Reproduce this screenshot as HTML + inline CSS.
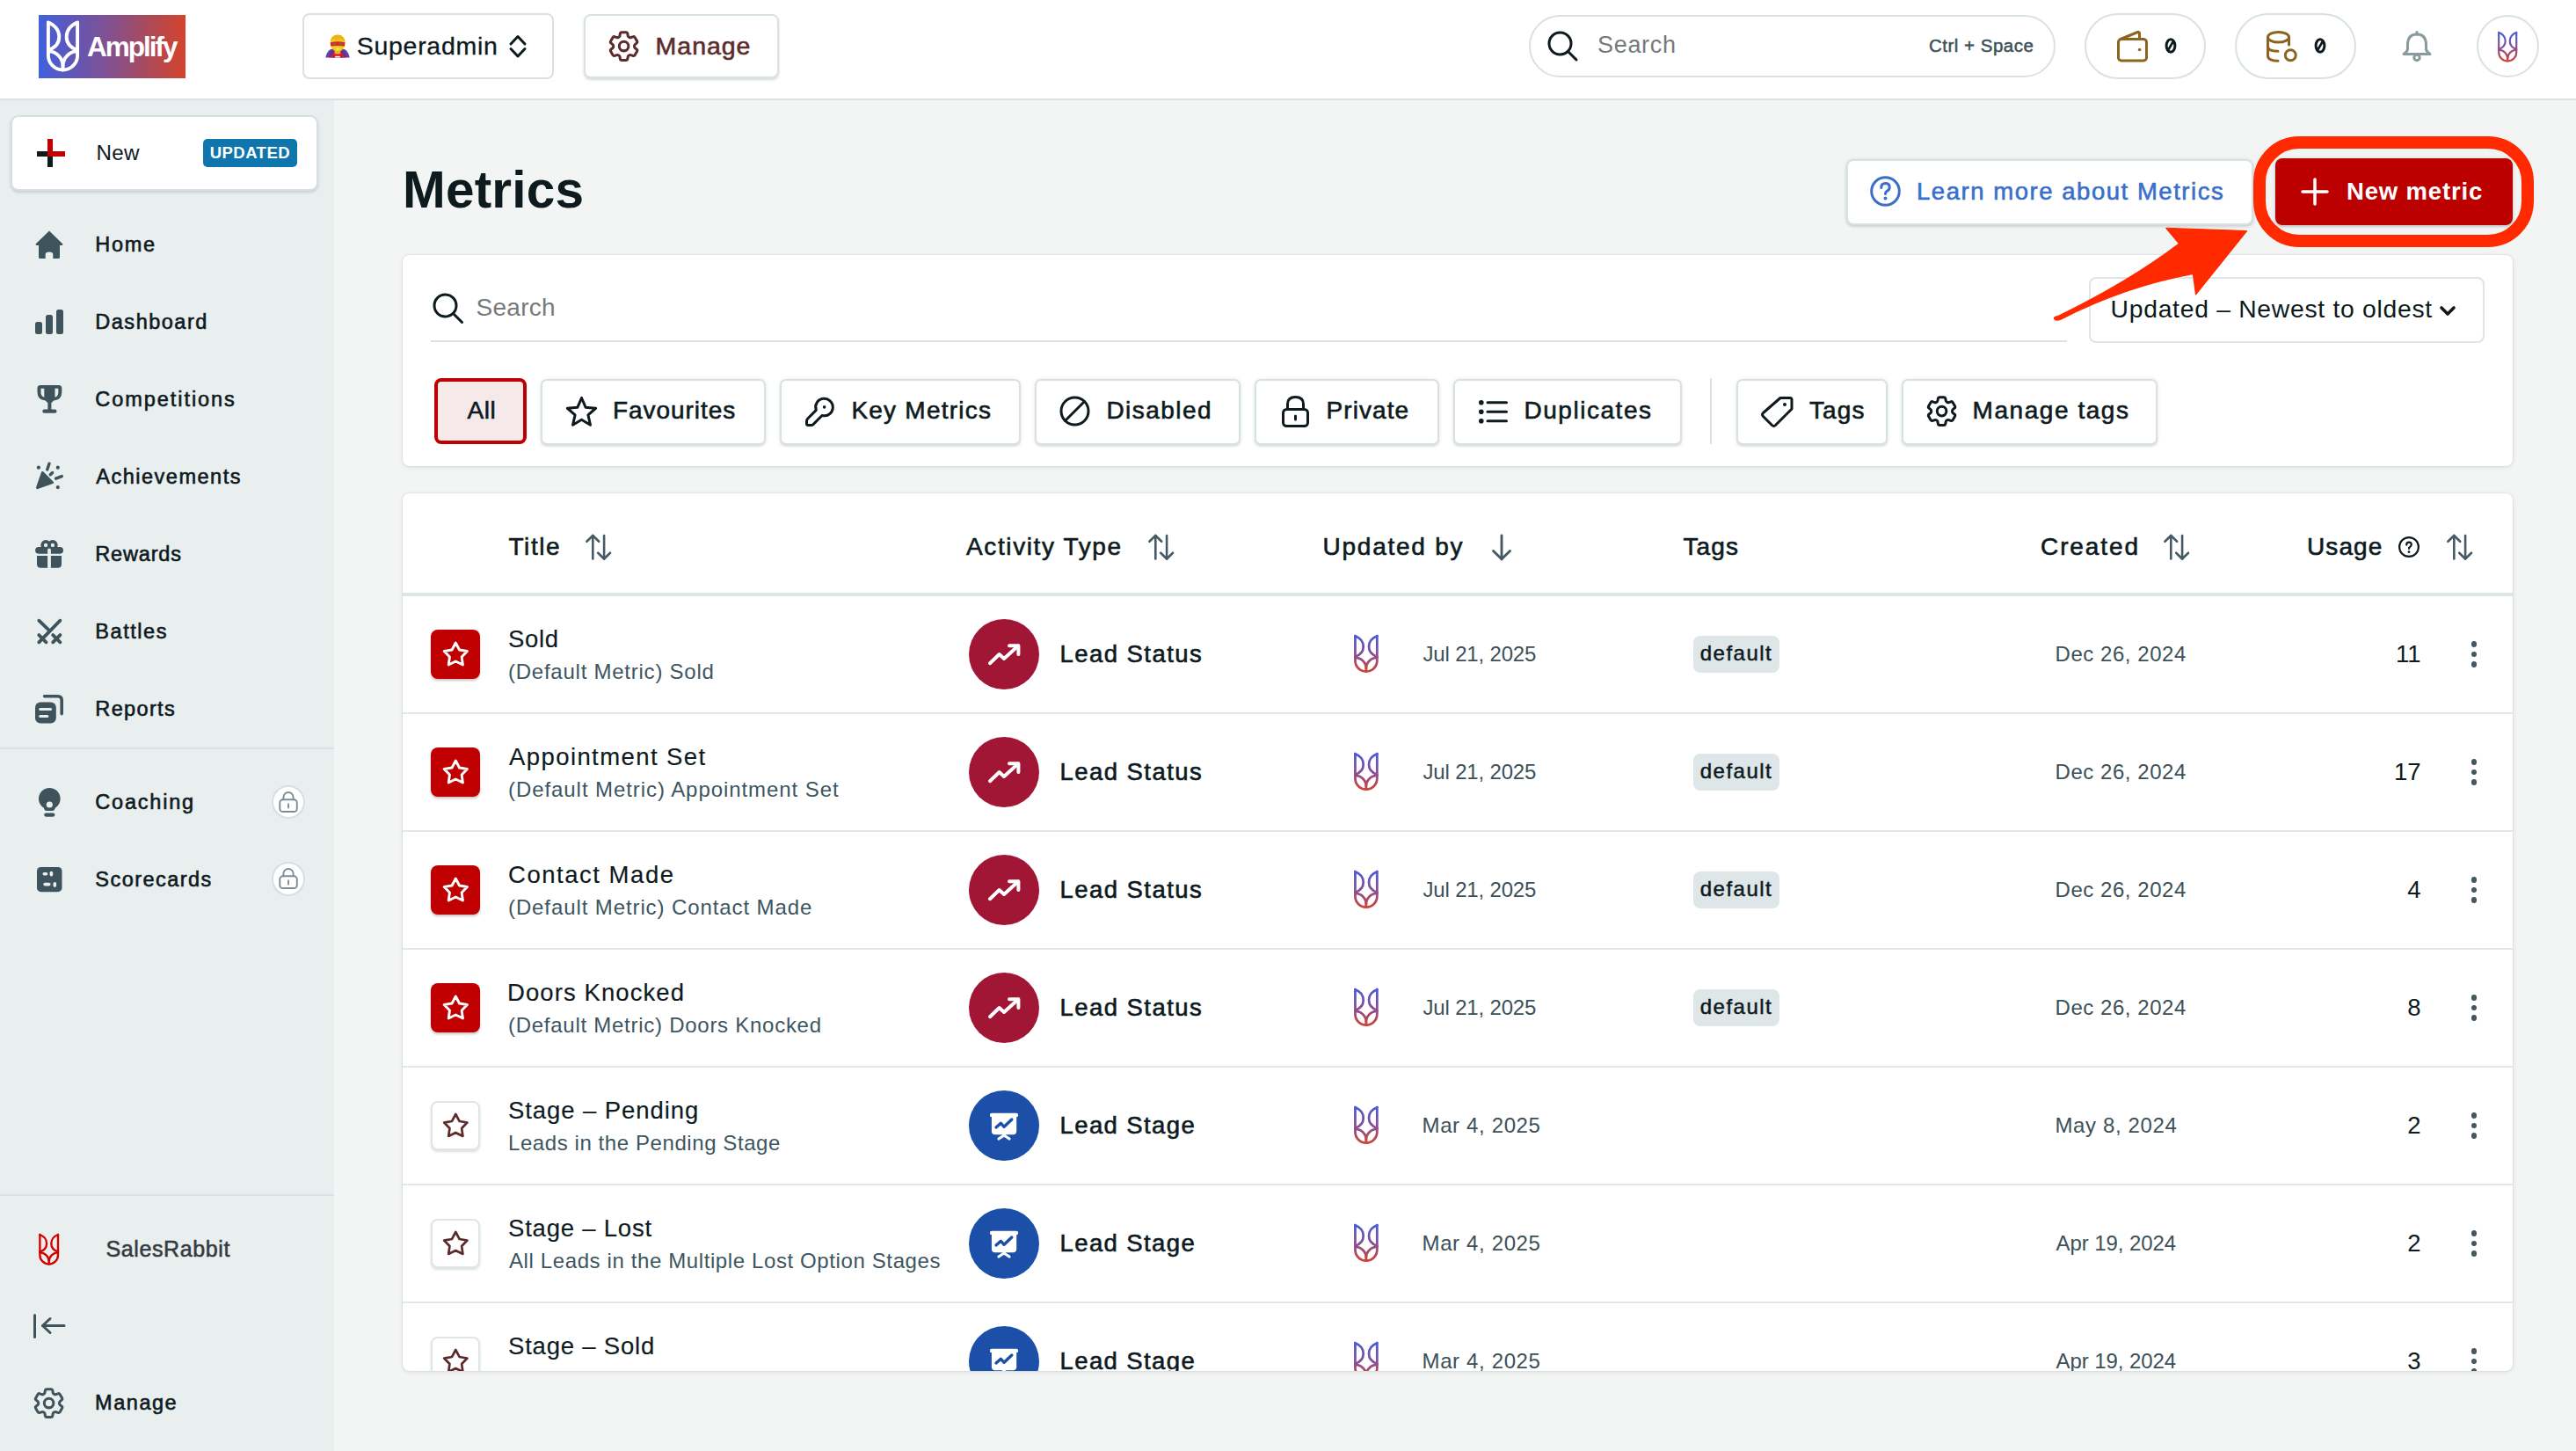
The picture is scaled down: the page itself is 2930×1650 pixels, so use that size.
<!DOCTYPE html><html><head><meta charset="utf-8"><style>
html,body{margin:0;padding:0;}
body{width:2930px;height:1650px;position:relative;overflow:hidden;background:#f3f5f4;font-family:"Liberation Sans", sans-serif;}
</style></head><body>
<div style="position:absolute;left:0px;top:0px;width:2930px;height:112px;background:#fff;"></div>
<div style="position:absolute;left:0px;top:112px;width:2930px;height:2px;background:#d9e2e5;"></div>
<div style="position:absolute;left:0px;top:114px;width:380px;height:1536px;background:#e9eeef;"></div>
<div style="position:absolute;left:44px;top:17px;width:167px;height:72px;background:linear-gradient(90deg,#4160dc 0%,#6a55ad 30%,#8c4f84 55%,#b4484f 80%,#d5432c 100%);"></div>
<svg style="position:absolute;left:52.5px;top:24px;overflow:visible;" width="38.8" height="58" viewBox="0 0 38.8 58"><g fill="none" stroke="#fff" stroke-width="3.9" stroke-linecap="round" stroke-linejoin="round"><path d="M1.9 1.6 L1.9 38.9 A16.6 16.6 0 0 0 35.1 38.9 L35.1 1.6"/><path d="M1.9 1.6 C9.5 4.5 14.3 10.5 14.3 17.8 C14.3 25 9.5 30.5 1.9 33"/><path d="M35.1 1.6 C27.5 4.5 22.7 10.5 22.7 17.8 C22.7 25 27.5 30.5 35.1 33"/><path d="M1.9 34.4 A16.6 16.6 0 0 1 18.5 51 L18.5 55.5"/><path d="M35.1 34.4 A16.6 16.6 0 0 0 18.5 51"/></g></svg>
<div style="position:absolute;top:38.1px;font-size:31.5px;line-height:31.5px;color:#fff;font-weight:bold;white-space:nowrap;left:99.10px;letter-spacing:-1.999px;">Amplify</div>
<div style="position:absolute;left:344px;top:15px;width:286px;height:75px;box-sizing:border-box;border:2px solid #d8e2e5;border-radius:8px;background:#fff;"></div>
<svg style="position:absolute;left:370px;top:38.6px;overflow:visible;" width="28" height="26.5" viewBox="0 0 28 26.5"><path d="M0.3 26.5 Q1.5 17.5 9 16.3 L19 16.3 Q26.5 17.5 27.7 26.5 Z" fill="#6b3ea3"/><path d="M4 26.5 Q5 19 8.5 17.5 L19.5 17.5 Q23 19 24 26.5 Z" fill="#4e2a86" opacity="0.5"/><path d="M6.3 26.5 L7.5 22 L20.5 22 L21.7 26.5 Z" fill="#e0142e"/><rect x="11.2" y="24.8" width="5.6" height="1.7" fill="#fff"/><rect x="10.4" y="18.5" width="7" height="4" rx="1.5" fill="#e9b310"/><ellipse cx="14.1" cy="10.2" rx="8.4" ry="9.6" fill="#f7c81d"/><path d="M5.8 10 Q5.5 0.6 14.1 0.5 Q22.7 0.6 22.4 10 Q21 5.5 17 5.2 Q12 7 9 4.8 Q6.5 6.5 5.8 10 Z" fill="#eab412"/><path d="M5.8 9.3 Q14.1 7.2 22.4 9.3 L22 13.6 Q14.1 12.2 6.2 13.6 Z" fill="#d9262f"/><ellipse cx="10.7" cy="11" rx="1.7" ry="1.2" fill="#6a7a2a"/><ellipse cx="17.5" cy="11" rx="1.7" ry="1.2" fill="#6a7a2a"/><ellipse cx="14.1" cy="16.8" rx="1.6" ry="1" fill="#f3e6c0"/></svg>
<div style="position:absolute;top:38.1px;font-size:28.5px;line-height:28.5px;color:#0d1a1e;font-weight:normal;white-space:nowrap;left:405.70px;-webkit-text-stroke:0.3px #0d1a1e;letter-spacing:0.720px;">Superadmin</div>
<svg style="position:absolute;left:580px;top:40px;overflow:visible;" width="18" height="25" viewBox="0 0 18 25"><path d="M1 10 L9 1.5 L17 10 M1 15.5 L9 24 L17 15.5" fill="none" stroke="#0d1a1e" stroke-width="3" stroke-linecap="round" stroke-linejoin="round"/></svg>
<div style="position:absolute;left:664px;top:16px;width:222px;height:73px;box-sizing:border-box;border:2px solid #d8e2e5;border-radius:8px;background:#fff;box-shadow:0 2px 3px rgba(30,50,60,0.18);"></div>
<svg style="position:absolute;left:692.8px;top:35.6px;overflow:visible;" width="33.2" height="33.2" viewBox="2.6 2.6 18.8 18.8"><g fill="none" stroke="#5c2b2b" stroke-width="1.72" stroke-linecap="round" stroke-linejoin="round"><path d="M9.594 3.94c.09-.542.56-.94 1.11-.94h2.593c.55 0 1.02.398 1.11.94l.213 1.281c.063.374.313.686.645.87.074.04.147.083.22.127.325.196.72.257 1.075.124l1.217-.456a1.125 1.125 0 0 1 1.37.49l1.296 2.247a1.125 1.125 0 0 1-.26 1.431l-1.003.827c-.293.241-.438.613-.43.992a7.723 7.723 0 0 1 0 .255c-.008.378.137.75.43.991l1.004.827c.424.35.534.955.26 1.43l-1.298 2.247a1.125 1.125 0 0 1-1.369.491l-1.217-.456c-.355-.133-.75-.072-1.076.124a6.47 6.47 0 0 1-.22.128c-.331.183-.581.495-.644.869l-.213 1.281c-.09.543-.56.94-1.11.94h-2.594c-.55 0-1.019-.398-1.11-.94l-.213-1.281c-.062-.374-.312-.686-.644-.87a6.52 6.52 0 0 1-.22-.127c-.325-.196-.72-.257-1.076-.124l-1.217.456a1.125 1.125 0 0 1-1.369-.49l-1.297-2.247a1.125 1.125 0 0 1 .26-1.431l1.004-.827c.292-.24.437-.613.43-.991a6.932 6.932 0 0 1 0-.255c.007-.38-.138-.751-.43-.992l-1.004-.827a1.125 1.125 0 0 1-.26-1.43l1.297-2.247a1.125 1.125 0 0 1 1.37-.491l1.216.456c.356.133.751.072 1.076-.124.072-.044.146-.086.22-.128.332-.183.582-.495.644-.869l.214-1.28Z"/><path d="M15 12a3 3 0 1 1-6 0 3 3 0 0 1 6 0Z"/></g></svg>
<div style="position:absolute;top:37.8px;font-size:28.5px;line-height:28.5px;color:#5c2b2b;font-weight:normal;white-space:nowrap;left:745.60px;-webkit-text-stroke:0.6px #5c2b2b;letter-spacing:0.972px;">Manage</div>
<div style="position:absolute;left:1739px;top:17px;width:599px;height:71px;box-sizing:border-box;border:2px solid #d8e2e5;border-radius:36px;background:#fff;"></div>
<svg style="position:absolute;left:1760px;top:35px;overflow:visible;" width="35" height="35" viewBox="0 0 35 35"><g fill="none" stroke="#0d1a1e" stroke-width="3" stroke-linecap="round"><circle cx="14.5" cy="14.5" r="12.5"/><path d="M23.5 23.5 L33 33"/></g></svg>
<div style="position:absolute;top:38.4px;font-size:27px;line-height:27px;color:#757a7c;font-weight:normal;white-space:nowrap;left:1817.00px;letter-spacing:0.694px;">Search</div>
<div style="position:absolute;top:41.9px;font-size:20.5px;line-height:20.5px;color:#3c5058;font-weight:normal;white-space:nowrap;left:2194.00px;-webkit-text-stroke:0.5px #3c5058;letter-spacing:0.503px;">Ctrl + Space</div>
<div style="position:absolute;left:2371px;top:15px;width:138px;height:75px;box-sizing:border-box;border:2px solid #d8e2e5;border-radius:38px;background:#fff;"></div>
<svg style="position:absolute;left:2407.8px;top:35px;overflow:visible;" width="35" height="35" viewBox="0 0 35 35"><g fill="none" stroke="#8c6420" stroke-width="3" stroke-linejoin="round" stroke-linecap="round"><rect x="1.5" y="9.5" width="32" height="24.5" rx="3.5"/><path d="M4 9.5 L23.5 1.5 Q25.5 1 25.5 3 L25.5 9.5"/></g><circle cx="25.6" cy="21.5" r="1.8" fill="#8c6420"/></svg>
<svg style="position:absolute;left:2461.5px;top:43px;overflow:visible;" width="14" height="18" viewBox="0 0 14 18"><g fill="none" stroke="#0d1a1e" stroke-width="3"><ellipse cx="7" cy="9" rx="4.9" ry="7.2"/><path d="M3.5 15 L10.5 3" stroke-width="2.6"/></g></svg>
<div style="position:absolute;left:2542px;top:15px;width:138px;height:75px;box-sizing:border-box;border:2px solid #d8e2e5;border-radius:38px;background:#fff;"></div>
<svg style="position:absolute;left:2578px;top:35px;overflow:visible;" width="36" height="36" viewBox="0 0 36 36"><g fill="none" stroke="#8c6420" stroke-width="3" stroke-linecap="round"><ellipse cx="13.5" cy="7.3" rx="12" ry="5.8"/><path d="M1.5 7.3 L1.5 28.5 Q1.5 34 13 34.3"/><path d="M1.5 18 Q1.5 23 13 23.3"/><path d="M25.5 7.3 L25.5 16"/><circle cx="27.3" cy="27.8" r="6"/></g></svg>
<svg style="position:absolute;left:2631.5px;top:43px;overflow:visible;" width="14" height="18" viewBox="0 0 14 18"><g fill="none" stroke="#0d1a1e" stroke-width="3"><ellipse cx="7" cy="9" rx="4.9" ry="7.2"/><path d="M3.5 15 L10.5 3" stroke-width="2.6"/></g></svg>
<svg style="position:absolute;left:2731.5px;top:35px;overflow:visible;" width="34" height="35" viewBox="0 0 34 35"><g fill="none" stroke="#8a9a9e" stroke-width="3" stroke-linejoin="round" stroke-linecap="round"><path d="M17 4 Q7 4 6.5 15 L6.5 21 Q6 24 2 26.5 L32 26.5 Q28 24 27.5 21 L27.5 15 Q27 4 17 4 Z"/><path d="M17 1.5 L17 4"/><circle cx="17" cy="30.5" r="3.2"/></g></svg>
<div style="position:absolute;left:2816.5px;top:17px;width:71.0px;height:71px;box-sizing:border-box;border:2px solid #d8e2e5;border-radius:50%;background:#fff;"></div>
<svg width="0" height="0" style="position:absolute"><defs><linearGradient id="rg" x1="0" y1="0" x2="0" y2="58" gradientUnits="userSpaceOnUse"><stop offset="0" stop-color="#4a5ad8"/><stop offset="0.5" stop-color="#85509a"/><stop offset="1" stop-color="#d4432e"/></linearGradient></defs></svg>
<svg style="position:absolute;left:2840.5px;top:35.6px;overflow:visible;" width="23" height="35" viewBox="0 0 38 58"><g fill="none" stroke="url(#rg)" stroke-width="3.6" stroke-linecap="round" stroke-linejoin="round"><path d="M1.9 1.6 L1.9 38.9 A16.6 16.6 0 0 0 35.1 38.9 L35.1 1.6"/><path d="M1.9 1.6 C9.5 4.5 14.3 10.5 14.3 17.8 C14.3 25 9.5 30.5 1.9 33"/><path d="M35.1 1.6 C27.5 4.5 22.7 10.5 22.7 17.8 C22.7 25 27.5 30.5 35.1 33"/><path d="M1.9 34.4 A16.6 16.6 0 0 1 18.5 51 L18.5 55.5"/><path d="M35.1 34.4 A16.6 16.6 0 0 0 18.5 51"/></g></svg>
<div style="position:absolute;left:12px;top:131px;width:350px;height:86px;box-sizing:border-box;border:2px solid #d6e0e3;border-radius:9px;background:#fff;box-shadow:0 2px 3px rgba(30,50,60,0.16);"></div>
<div style="position:absolute;left:42px;top:172px;width:32px;height:6px;background:#0e1a1e;"></div>
<div style="position:absolute;left:54px;top:158px;width:6px;height:32px;background:#0e1a1e;"></div>
<div style="position:absolute;left:57px;top:172px;width:17px;height:6px;background:#c00000;"></div>
<div style="position:absolute;left:54px;top:158px;width:6px;height:17px;background:#c00000;"></div>
<div style="position:absolute;left:54px;top:172px;width:6px;height:6px;background:#c00000;"></div>
<div style="position:absolute;top:161.5px;font-size:24.2px;line-height:24.2px;color:#0e1a1e;font-weight:normal;white-space:nowrap;left:109.60px;letter-spacing:0.240px;">New</div>
<div style="position:absolute;left:231px;top:158px;width:107px;height:32px;background:#0f76ad;border-radius:5px;"></div>
<div style="position:absolute;top:164.8px;font-size:18.5px;line-height:18.5px;color:#fff;font-weight:bold;white-space:nowrap;left:238.70px;letter-spacing:0.469px;">UPDATED</div>
<div style="position:absolute;top:266.6px;font-size:23.5px;line-height:23.5px;color:#0e1a1e;font-weight:normal;white-space:nowrap;left:108.30px;-webkit-text-stroke:0.6px #0e1a1e;letter-spacing:1.728px;">Home</div>
<div style="position:absolute;top:354.6px;font-size:23.5px;line-height:23.5px;color:#0e1a1e;font-weight:normal;white-space:nowrap;left:108.30px;-webkit-text-stroke:0.6px #0e1a1e;letter-spacing:1.513px;">Dashboard</div>
<div style="position:absolute;top:442.6px;font-size:23.5px;line-height:23.5px;color:#0e1a1e;font-weight:normal;white-space:nowrap;left:108.30px;-webkit-text-stroke:0.6px #0e1a1e;letter-spacing:1.946px;">Competitions</div>
<div style="position:absolute;top:530.6px;font-size:23.5px;line-height:23.5px;color:#0e1a1e;font-weight:normal;white-space:nowrap;left:109.30px;-webkit-text-stroke:0.6px #0e1a1e;letter-spacing:1.505px;">Achievements</div>
<div style="position:absolute;top:618.6px;font-size:23.5px;line-height:23.5px;color:#0e1a1e;font-weight:normal;white-space:nowrap;left:108.30px;-webkit-text-stroke:0.6px #0e1a1e;letter-spacing:0.821px;">Rewards</div>
<div style="position:absolute;top:706.6px;font-size:23.5px;line-height:23.5px;color:#0e1a1e;font-weight:normal;white-space:nowrap;left:108.30px;-webkit-text-stroke:0.6px #0e1a1e;letter-spacing:1.551px;">Battles</div>
<div style="position:absolute;top:794.6px;font-size:23.5px;line-height:23.5px;color:#0e1a1e;font-weight:normal;white-space:nowrap;left:108.30px;-webkit-text-stroke:0.6px #0e1a1e;letter-spacing:1.361px;">Reports</div>
<div style="position:absolute;top:900.6px;font-size:23.5px;line-height:23.5px;color:#0e1a1e;font-weight:normal;white-space:nowrap;left:108.30px;-webkit-text-stroke:0.6px #0e1a1e;letter-spacing:1.797px;">Coaching</div>
<div style="position:absolute;top:988.6px;font-size:23.5px;line-height:23.5px;color:#0e1a1e;font-weight:normal;white-space:nowrap;left:108.30px;-webkit-text-stroke:0.6px #0e1a1e;letter-spacing:1.466px;">Scorecards</div>
<svg style="position:absolute;left:40px;top:262px;overflow:visible;" width="32" height="32" viewBox="0 0 32 32"><path fill="#3f535c" d="M16 0.5 L0.8 15.2 Q0 17 1.8 17 L4 17 L4 30.5 Q4 32 5.5 32 L11.7 32 L11.7 27 Q11.7 24.5 16 24.5 Q20.3 24.5 20.3 27 L20.3 32 L26.5 32 Q28 32 28 30.5 L28 17 L30.2 17 Q32 17 31.2 15.2 Z"/></svg>
<svg style="position:absolute;left:40px;top:352px;overflow:visible;" width="32" height="28" viewBox="0 0 32 28"><g fill="#3f535c"><rect x="0" y="14" width="8" height="14" rx="2.5"/><rect x="12" y="6" width="8" height="22" rx="2.5"/><rect x="24" y="0" width="8" height="28" rx="2.5"/></g></svg>
<svg style="position:absolute;left:41.6px;top:437px;overflow:visible;" width="29" height="33" viewBox="0 0 29 33"><path fill="#3f535c" d="M4 0.9 L24.8 0.9 Q28.3 0.9 28.3 4.4 L28.3 9 Q28.3 17.5 19.2 18.5 Q17 21.3 14.4 21.8 Q11.8 21.3 9.6 18.5 Q0.5 17.5 0.5 9 L0.5 4.4 Q0.5 0.9 4 0.9 Z"/><g fill="#e9eeef"><path d="M4.5 4.8 L8.3 4.8 L8.3 14.8 Q4.5 13.6 4.5 9.2 Z"/><path d="M24.3 4.8 L20.5 4.8 L20.5 14.8 Q24.3 13.6 24.3 9.2 Z"/></g><g fill="#3f535c"><rect x="12.4" y="19" width="4" height="11"/><rect x="6.3" y="28.6" width="16.2" height="4.2" rx="2.1"/></g></svg>
<svg style="position:absolute;left:38px;top:524px;overflow:visible;" width="34" height="32" viewBox="0 0 34 32"><path fill="#3f535c" stroke="#3f535c" stroke-width="3" stroke-linejoin="round" d="M10.4 13.5 L21.6 24.7 L4.5 30.6 Z"/><g fill="#3f535c"><circle cx="5.9" cy="7.7" r="2.1"/><circle cx="27.8" cy="7.7" r="2.1"/><circle cx="27.8" cy="30.1" r="2.1"/></g><g stroke="#3f535c" stroke-width="3.4" stroke-linecap="round"><path d="M18 3.2 L15.7 10"/><path d="M21.6 13.5 L19.3 15.8"/><path d="M25.6 20.2 L32.3 17.6"/></g></svg>
<svg style="position:absolute;left:40px;top:614px;overflow:visible;" width="32" height="33" viewBox="0 0 32 33"><g fill="none" stroke="#3f535c" stroke-width="3.6"><circle cx="12.1" cy="5.9" r="4"/><circle cx="19.9" cy="5.9" r="4"/></g><g fill="#3f535c"><rect x="0.1" y="8" width="31.9" height="7.7" rx="3.85"/><path d="M2 17.9 L30 17.9 L30 27.3 Q30 31.8 25.5 31.8 L6.5 31.8 Q2 31.8 2 27.3 Z"/></g><path d="M14.1 33 L14.1 11.5 Q14.1 9.6 16 9.6 Q17.9 9.6 17.9 11.5 L17.9 33 Z" fill="#e9eeef"/></svg>
<svg style="position:absolute;left:41.7px;top:704px;overflow:visible;" width="29" height="29" viewBox="0 0 29 29"><g fill="none" stroke="#3f535c" stroke-width="3.8" stroke-linecap="round"><path d="M26.4 1.7 L2.3 26.3"/><path d="M2.3 1.7 L13.9 12.8"/><path d="M2.3 18.1 L10.5 26.3"/><path d="M18.2 18.1 L26.4 26.3 M26.4 18.1 L18.2 26.3"/></g></svg>
<svg style="position:absolute;left:40px;top:790px;overflow:visible;" width="32" height="33" viewBox="0 0 32 33"><rect x="0" y="8.5" width="23.8" height="24" rx="6" fill="#3f535c"/><path d="M10.6 1.8 L25.6 1.8 Q30.2 1.8 30.2 6.4 L30.2 21.6" fill="none" stroke="#3f535c" stroke-width="3.6" stroke-linecap="round"/><g stroke="#e9eeef" stroke-width="3.2" stroke-linecap="round"><path d="M5.8 16.5 L17.5 16.5"/><path d="M5.8 24.5 L13.8 24.5"/></g></svg>
<div style="position:absolute;left:0px;top:850px;width:380px;height:2px;background:#d9e2e5;"></div>
<svg style="position:absolute;left:43.8px;top:895.6px;overflow:visible;" width="25" height="33" viewBox="0 0 25 33"><g fill="#3f535c"><circle cx="12.3" cy="12.3" r="12.3"/><path d="M5 18 L19.6 18 L18.5 23.5 Q18 26 15.5 26 L9.1 26 Q6.6 26 6.1 23.5 Z"/><rect x="6.2" y="28.4" width="12.2" height="4.4" rx="2.2"/></g><circle cx="12.3" cy="19" r="3.6" fill="#e9eeef"/></svg>
<svg style="position:absolute;left:41.7px;top:986.4px;overflow:visible;" width="28.5" height="28.2" viewBox="0 0 28.5 28.2"><rect width="28.5" height="28.2" rx="4.5" fill="#3f535c"/><g stroke="#e9eeef" stroke-width="3.6" stroke-linecap="round"><path d="M8.3 7.7 L10.5 7.7"/><path d="M16.4 6.5 L16.4 8.7"/><path d="M9.1 19.6 L13.8 19.6"/><path d="M20.3 18.9 L20.3 21.1"/></g></svg>
<div style="position:absolute;left:308.5px;top:892.5px;width:38.5px;height:38.59999999999991px;box-sizing:border-box;border:2px solid #d5dfe2;border-radius:50%;background:#fff;"></div>
<svg style="position:absolute;left:316px;top:897.8px;overflow:visible;" width="24" height="28" viewBox="0 0 24 28"><g fill="none" stroke="#7a8e95" stroke-width="1.9" stroke-linecap="round"><rect x="2.3" y="11.3" width="19.5" height="13.7" rx="3.5"/><path d="M6.4 11.3 L6.4 8.6 A5.6 5.6 0 0 1 17.6 8.6 L17.6 11.3"/><path d="M12 16.3 L12 20.5"/></g></svg>
<div style="position:absolute;left:308.5px;top:980.0px;width:38.5px;height:38.59999999999991px;box-sizing:border-box;border:2px solid #d5dfe2;border-radius:50%;background:#fff;"></div>
<svg style="position:absolute;left:316px;top:985.3px;overflow:visible;" width="24" height="28" viewBox="0 0 24 28"><g fill="none" stroke="#7a8e95" stroke-width="1.9" stroke-linecap="round"><rect x="2.3" y="11.3" width="19.5" height="13.7" rx="3.5"/><path d="M6.4 11.3 L6.4 8.6 A5.6 5.6 0 0 1 17.6 8.6 L17.6 11.3"/><path d="M12 16.3 L12 20.5"/></g></svg>
<div style="position:absolute;left:0px;top:1358px;width:380px;height:2px;background:#d9e2e5;"></div>
<svg style="position:absolute;left:44px;top:1402.5px;overflow:visible;" width="24" height="36" viewBox="0 0 38 58"><g fill="none" stroke="#d40000" stroke-width="3.8" stroke-linecap="round" stroke-linejoin="round"><path d="M1.9 1.6 L1.9 38.9 A16.6 16.6 0 0 0 35.1 38.9 L35.1 1.6"/><path d="M1.9 1.6 C9.5 4.5 14.3 10.5 14.3 17.8 C14.3 25 9.5 30.5 1.9 33"/><path d="M35.1 1.6 C27.5 4.5 22.7 10.5 22.7 17.8 C22.7 25 27.5 30.5 35.1 33"/><path d="M1.9 34.4 A16.6 16.6 0 0 1 18.5 51 L18.5 55.5"/><path d="M35.1 34.4 A16.6 16.6 0 0 0 18.5 51"/></g></svg>
<div style="position:absolute;top:1408.3px;font-size:25px;line-height:25px;color:#333b3e;font-weight:normal;white-space:nowrap;left:120.50px;-webkit-text-stroke:0.55px #333b3e;letter-spacing:0.614px;">SalesRabbit</div>
<svg style="position:absolute;left:38px;top:1494px;overflow:visible;" width="36" height="28" viewBox="0 0 36 28"><g fill="none" stroke="#3f535c" stroke-width="3" stroke-linecap="round" stroke-linejoin="round"><path d="M1.5 1.5 L1.5 26.5"/><path d="M35 13.5 L10.5 13.5"/><path d="M19 5.5 L10.5 13.5 L19 21.5"/></g></svg>
<svg style="position:absolute;left:39.3px;top:1579.3px;overflow:visible;" width="33.2" height="33.2" viewBox="2.6 2.6 18.8 18.8"><g fill="none" stroke="#3f535c" stroke-width="1.72" stroke-linecap="round" stroke-linejoin="round"><path d="M9.594 3.94c.09-.542.56-.94 1.11-.94h2.593c.55 0 1.02.398 1.11.94l.213 1.281c.063.374.313.686.645.87.074.04.147.083.22.127.325.196.72.257 1.075.124l1.217-.456a1.125 1.125 0 0 1 1.37.49l1.296 2.247a1.125 1.125 0 0 1-.26 1.431l-1.003.827c-.293.241-.438.613-.43.992a7.723 7.723 0 0 1 0 .255c-.008.378.137.75.43.991l1.004.827c.424.35.534.955.26 1.43l-1.298 2.247a1.125 1.125 0 0 1-1.369.491l-1.217-.456c-.355-.133-.75-.072-1.076.124a6.47 6.47 0 0 1-.22.128c-.331.183-.581.495-.644.869l-.213 1.281c-.09.543-.56.94-1.11.94h-2.594c-.55 0-1.019-.398-1.11-.94l-.213-1.281c-.062-.374-.312-.686-.644-.87a6.52 6.52 0 0 1-.22-.127c-.325-.196-.72-.257-1.076-.124l-1.217.456a1.125 1.125 0 0 1-1.369-.49l-1.297-2.247a1.125 1.125 0 0 1 .26-1.431l1.004-.827c.292-.24.437-.613.43-.991a6.932 6.932 0 0 1 0-.255c.007-.38-.138-.751-.43-.992l-1.004-.827a1.125 1.125 0 0 1-.26-1.43l1.297-2.247a1.125 1.125 0 0 1 1.37-.491l1.216.456c.356.133.751.072 1.076-.124.072-.044.146-.086.22-.128.332-.183.582-.495.644-.869l.214-1.28Z"/><path d="M15 12a3 3 0 1 1-6 0 3 3 0 0 1 6 0Z"/></g></svg>
<div style="position:absolute;top:1584.1px;font-size:23.5px;line-height:23.5px;color:#0e1a1e;font-weight:normal;white-space:nowrap;left:108.10px;-webkit-text-stroke:0.6px #0e1a1e;letter-spacing:1.529px;">Manage</div>
<div style="position:absolute;top:187.3px;font-size:58.5px;line-height:58.5px;color:#0d1a1e;font-weight:bold;white-space:nowrap;left:458.00px;letter-spacing:0.200px;">Metrics</div>
<div style="position:absolute;left:2100px;top:180.5px;width:463px;height:75.19999999999999px;box-sizing:border-box;border:2px solid #d8e2e5;border-radius:8px;background:#fff;box-shadow:0 0 4px rgba(20,40,50,0.10),0 2px 3px rgba(20,40,50,0.12);"></div>
<svg style="position:absolute;left:2127px;top:200px;overflow:visible;" width="35" height="35" viewBox="0 0 35 35"><g fill="none" stroke="#3a6fc9" stroke-width="3" stroke-linecap="round"><circle cx="17.5" cy="17.5" r="15.8"/><path d="M12.8 13.5 Q12.8 8.6 17.5 8.6 Q22.2 8.6 22.2 13 Q22.2 16 19.2 17.4 Q17.5 18.3 17.5 20.5"/></g><circle cx="17.5" cy="25.5" r="2" fill="#3a6fc9"/></svg>
<div style="position:absolute;top:203.7px;font-size:27.5px;line-height:27.5px;color:#3a6fc9;font-weight:normal;white-space:nowrap;left:2180.00px;-webkit-text-stroke:0.6px #3a6fc9;letter-spacing:1.540px;">Learn more about Metrics</div>
<div style="position:absolute;left:2588px;top:179.6px;width:270px;height:76.4px;background:#bc0000;border-radius:8px;box-shadow:0 0 4px rgba(20,40,50,0.12),0 2px 3px rgba(30,30,30,0.18);"></div>
<svg style="position:absolute;left:2617px;top:202px;overflow:visible;" width="32" height="32" viewBox="0 0 32 32"><g stroke="#fff" stroke-width="3.5" stroke-linecap="round"><path d="M16 2 L16 30"/><path d="M2 16 L30 16"/></g></svg>
<div style="position:absolute;top:203.7px;font-size:27.5px;line-height:27.5px;color:#fff;font-weight:bold;white-space:nowrap;left:2669.00px;letter-spacing:0.841px;">New metric</div>
<div style="position:absolute;left:458px;top:290px;width:2400px;height:240px;background:#fff;border-radius:8px;box-shadow:0 0 0 1px rgba(20,40,50,0.04),0 1px 5px rgba(20,40,50,0.12);"></div>
<svg style="position:absolute;left:492px;top:333px;overflow:visible;" width="36" height="36" viewBox="0 0 36 36"><g fill="none" stroke="#0d1a1e" stroke-width="3" stroke-linecap="round"><circle cx="14.5" cy="14.5" r="12.5"/><path d="M23.5 23.5 L33.5 33.5"/></g></svg>
<div style="position:absolute;top:336.3px;font-size:28px;line-height:28px;color:#757a7c;font-weight:normal;white-space:nowrap;left:541.50px;letter-spacing:0.271px;">Search</div>
<div style="position:absolute;left:490px;top:387px;width:1861px;height:2px;background:#d9e2e5;"></div>
<div style="position:absolute;left:2376px;top:315px;width:450px;height:75px;box-sizing:border-box;border:2px solid #dce5e8;border-radius:8px;background:#fff;"></div>
<div style="position:absolute;top:336.7px;font-size:28.3px;line-height:28.3px;color:#0d1a1e;font-weight:normal;white-space:nowrap;left:2400.60px;letter-spacing:0.717px;">Updated – Newest to oldest</div>
<svg style="position:absolute;left:2775px;top:348px;overflow:visible;" width="18" height="11" viewBox="0 0 18 11"><path d="M2 2 L9 9 L16 2" fill="none" stroke="#0d1a1e" stroke-width="3.6" stroke-linecap="round" stroke-linejoin="round"/></svg>
<div style="position:absolute;left:494px;top:430px;width:105px;height:75px;box-sizing:border-box;border:4px solid #c00000;border-radius:8px;background:#f5e9ea;"></div>
<div style="position:absolute;top:453.3px;font-size:28px;line-height:28px;color:#0d1a1e;font-weight:normal;white-space:nowrap;left:531.50px;-webkit-text-stroke:0.6px #0d1a1e;letter-spacing:0.552px;">All</div>
<div style="position:absolute;left:615.3px;top:430.5px;width:255.4000000000001px;height:75.19999999999999px;box-sizing:border-box;border:2px solid #d8e2e5;border-radius:7px;background:#fff;box-shadow:0 0 4px rgba(20,40,50,0.10),0 2px 2px rgba(20,40,50,0.10);"></div>
<div style="position:absolute;left:887.3px;top:430.5px;width:273.4000000000001px;height:75.19999999999999px;box-sizing:border-box;border:2px solid #d8e2e5;border-radius:7px;background:#fff;box-shadow:0 0 4px rgba(20,40,50,0.10),0 2px 2px rgba(20,40,50,0.10);"></div>
<div style="position:absolute;left:1177.3px;top:430.5px;width:233.4000000000001px;height:75.19999999999999px;box-sizing:border-box;border:2px solid #d8e2e5;border-radius:7px;background:#fff;box-shadow:0 0 4px rgba(20,40,50,0.10),0 2px 2px rgba(20,40,50,0.10);"></div>
<div style="position:absolute;left:1427.3px;top:430.5px;width:209.4000000000001px;height:75.19999999999999px;box-sizing:border-box;border:2px solid #d8e2e5;border-radius:7px;background:#fff;box-shadow:0 0 4px rgba(20,40,50,0.10),0 2px 2px rgba(20,40,50,0.10);"></div>
<div style="position:absolute;left:1653.3px;top:430.5px;width:259.4000000000001px;height:75.19999999999999px;box-sizing:border-box;border:2px solid #d8e2e5;border-radius:7px;background:#fff;box-shadow:0 0 4px rgba(20,40,50,0.10),0 2px 2px rgba(20,40,50,0.10);"></div>
<div style="position:absolute;left:1944.5px;top:430px;width:2.0px;height:75px;background:#d8e2e5;"></div>
<div style="position:absolute;left:1975.3px;top:430.5px;width:171.39999999999986px;height:75.19999999999999px;box-sizing:border-box;border:2px solid #d8e2e5;border-radius:7px;background:#fff;box-shadow:0 0 4px rgba(20,40,50,0.10),0 2px 2px rgba(20,40,50,0.10);"></div>
<div style="position:absolute;left:2162.8px;top:430.5px;width:291.39999999999964px;height:75.19999999999999px;box-sizing:border-box;border:2px solid #d8e2e5;border-radius:7px;background:#fff;box-shadow:0 0 4px rgba(20,40,50,0.10),0 2px 2px rgba(20,40,50,0.10);"></div>
<div style="position:absolute;top:453.3px;font-size:28px;line-height:28px;color:#0d1a1e;font-weight:normal;white-space:nowrap;left:697.00px;-webkit-text-stroke:0.6px #0d1a1e;letter-spacing:0.954px;">Favourites</div>
<div style="position:absolute;top:453.3px;font-size:28px;line-height:28px;color:#0d1a1e;font-weight:normal;white-space:nowrap;left:968.40px;-webkit-text-stroke:0.6px #0d1a1e;letter-spacing:1.235px;">Key Metrics</div>
<div style="position:absolute;top:453.3px;font-size:28px;line-height:28px;color:#0d1a1e;font-weight:normal;white-space:nowrap;left:1258.40px;-webkit-text-stroke:0.6px #0d1a1e;letter-spacing:1.460px;">Disabled</div>
<div style="position:absolute;top:453.3px;font-size:28px;line-height:28px;color:#0d1a1e;font-weight:normal;white-space:nowrap;left:1508.50px;-webkit-text-stroke:0.6px #0d1a1e;letter-spacing:1.088px;">Private</div>
<div style="position:absolute;top:453.3px;font-size:28px;line-height:28px;color:#0d1a1e;font-weight:normal;white-space:nowrap;left:1733.50px;-webkit-text-stroke:0.6px #0d1a1e;letter-spacing:1.530px;">Duplicates</div>
<div style="position:absolute;top:453.3px;font-size:28px;line-height:28px;color:#0d1a1e;font-weight:normal;white-space:nowrap;left:2058.00px;-webkit-text-stroke:0.6px #0d1a1e;letter-spacing:1.118px;">Tags</div>
<div style="position:absolute;top:453.3px;font-size:28px;line-height:28px;color:#0d1a1e;font-weight:normal;white-space:nowrap;left:2243.50px;-webkit-text-stroke:0.6px #0d1a1e;letter-spacing:1.561px;">Manage tags</div>
<svg style="position:absolute;left:643px;top:450px;overflow:visible;" width="37" height="36" viewBox="0 0 37 36"><polygon points="18.50,2.50 23.08,13.19 34.67,14.25 25.92,21.91 28.49,33.25 18.50,27.30 8.51,33.25 11.08,21.91 2.33,14.25 13.92,13.19" fill="none" stroke="#0d1a1e" stroke-width="3" stroke-linejoin="round"/></svg>
<svg style="position:absolute;left:916px;top:451px;overflow:visible;" width="34" height="34" viewBox="0 0 34 34"><path d="M12.3 15.4 L3 24.7 Q1.5 26.2 1.5 28 L1.5 30.8 Q1.5 32.6 3.3 32.6 L6.6 32.6 Q8.1 32.6 9.2 31.4 L19 21.5 A9.8 9.8 0 1 0 12.3 15.4 Z" fill="none" stroke="#0d1a1e" stroke-width="3" stroke-linejoin="round"/><circle cx="21.6" cy="11.9" r="1.8" fill="#0d1a1e"/></svg>
<svg style="position:absolute;left:1205px;top:450px;overflow:visible;" width="35" height="35" viewBox="0 0 35 35"><g fill="none" stroke="#0d1a1e" stroke-width="3" stroke-linecap="round"><circle cx="17.5" cy="17.5" r="15.5"/><path d="M28.5 6.5 L6.5 28.5"/></g></svg>
<svg style="position:absolute;left:1457.7px;top:449.8px;overflow:visible;" width="31" height="36" viewBox="0 0 31 36"><g fill="none" stroke="#0d1a1e" stroke-width="3" stroke-linecap="round"><rect x="1.5" y="15.5" width="28" height="19" rx="4"/><path d="M6.5 15.5 L6.5 9.5 Q6.5 1.5 15.5 1.5 Q24.5 1.5 24.5 9.5 L24.5 15.5"/><path d="M15.5 23 L15.5 27"/></g></svg>
<svg style="position:absolute;left:1682px;top:455px;overflow:visible;" width="33" height="27" viewBox="0 0 33 27"><g fill="#0d1a1e"><circle cx="2.8" cy="2.8" r="2.8"/><circle cx="2.8" cy="13.3" r="2.8"/><circle cx="2.8" cy="23.8" r="2.8"/></g><g stroke="#0d1a1e" stroke-width="3" stroke-linecap="round"><path d="M10 2.8 L31.5 2.8"/><path d="M10 13.3 L31.5 13.3"/><path d="M10 23.8 L31.5 23.8"/></g></svg>
<svg style="position:absolute;left:2003px;top:451px;overflow:visible;" width="37" height="35" viewBox="0 0 37 35"><g fill="none" stroke="#0d1a1e" stroke-width="3" stroke-linejoin="round"><path d="M22 1.5 L33 1.5 Q35 1.5 35 3.5 L35 14 L16.5 32.5 Q14.5 34.5 12.5 32.5 L2.5 22.5 Q0.5 20.5 2.5 18.5 Z"/></g><circle cx="27" cy="9" r="2" fill="#0d1a1e"/></svg>
<svg style="position:absolute;left:2191.8px;top:451.4px;overflow:visible;" width="33.2" height="33.2" viewBox="2.6 2.6 18.8 18.8"><g fill="none" stroke="#0d1a1e" stroke-width="1.7" stroke-linecap="round" stroke-linejoin="round"><path d="M9.594 3.94c.09-.542.56-.94 1.11-.94h2.593c.55 0 1.02.398 1.11.94l.213 1.281c.063.374.313.686.645.87.074.04.147.083.22.127.325.196.72.257 1.075.124l1.217-.456a1.125 1.125 0 0 1 1.37.49l1.296 2.247a1.125 1.125 0 0 1-.26 1.431l-1.003.827c-.293.241-.438.613-.43.992a7.723 7.723 0 0 1 0 .255c-.008.378.137.75.43.991l1.004.827c.424.35.534.955.26 1.43l-1.298 2.247a1.125 1.125 0 0 1-1.369.491l-1.217-.456c-.355-.133-.75-.072-1.076.124a6.47 6.47 0 0 1-.22.128c-.331.183-.581.495-.644.869l-.213 1.281c-.09.543-.56.94-1.11.94h-2.594c-.55 0-1.019-.398-1.11-.94l-.213-1.281c-.062-.374-.312-.686-.644-.87a6.52 6.52 0 0 1-.22-.127c-.325-.196-.72-.257-1.076-.124l-1.217.456a1.125 1.125 0 0 1-1.369-.49l-1.297-2.247a1.125 1.125 0 0 1 .26-1.431l1.004-.827c.292-.24.437-.613.43-.991a6.932 6.932 0 0 1 0-.255c.007-.38-.138-.751-.43-.992l-1.004-.827a1.125 1.125 0 0 1-.26-1.43l1.297-2.247a1.125 1.125 0 0 1 1.37-.491l1.216.456c.356.133.751.072 1.076-.124.072-.044.146-.086.22-.128.332-.183.582-.495.644-.869l.214-1.28Z"/><path d="M15 12a3 3 0 1 1-6 0 3 3 0 0 1 6 0Z"/></g></svg>
<div style="position:absolute;left:458px;top:561px;width:2400px;height:998px;background:#fff;border-radius:8px;box-shadow:0 0 0 1px rgba(20,40,50,0.04),0 1px 5px rgba(20,40,50,0.12);overflow:hidden;">
<div style="position:absolute;left:-458px;top:-561px;width:2930px;height:1650px;">
<div style="position:absolute;top:607.5px;font-size:28px;line-height:28px;color:#0d1a1e;font-weight:normal;white-space:nowrap;left:578.50px;-webkit-text-stroke:0.6px #0d1a1e;letter-spacing:1.554px;">Title</div>
<div style="position:absolute;top:607.5px;font-size:28px;line-height:28px;color:#0d1a1e;font-weight:normal;white-space:nowrap;left:1099.00px;-webkit-text-stroke:0.6px #0d1a1e;letter-spacing:1.618px;">Activity Type</div>
<div style="position:absolute;top:607.5px;font-size:28px;line-height:28px;color:#0d1a1e;font-weight:normal;white-space:nowrap;left:1504.50px;-webkit-text-stroke:0.6px #0d1a1e;letter-spacing:1.754px;">Updated by</div>
<div style="position:absolute;top:607.5px;font-size:28px;line-height:28px;color:#0d1a1e;font-weight:normal;white-space:nowrap;left:1914.50px;-webkit-text-stroke:0.6px #0d1a1e;letter-spacing:1.118px;">Tags</div>
<div style="position:absolute;top:607.5px;font-size:28px;line-height:28px;color:#0d1a1e;font-weight:normal;white-space:nowrap;left:2321.00px;-webkit-text-stroke:0.6px #0d1a1e;letter-spacing:1.910px;">Created</div>
<div style="position:absolute;top:607.5px;font-size:28px;line-height:28px;color:#0d1a1e;font-weight:normal;white-space:nowrap;left:2624.00px;-webkit-text-stroke:0.6px #0d1a1e;letter-spacing:1.084px;">Usage</div>
<svg style="position:absolute;left:667px;top:607.5px;overflow:visible;" width="28" height="29" viewBox="0 0 28 29"><g fill="none" stroke="#455a63" stroke-width="2.6" stroke-linecap="round" stroke-linejoin="round"><path d="M7.3 1 L7.3 27.5"/><path d="M0.4 7.8 L7.3 1 L14.2 7.8"/><path d="M20.1 1 L20.1 27.5"/><path d="M13.2 20.7 L20.1 27.5 L27 20.7"/></g></svg>
<svg style="position:absolute;left:1306.5px;top:607.5px;overflow:visible;" width="28" height="29" viewBox="0 0 28 29"><g fill="none" stroke="#455a63" stroke-width="2.6" stroke-linecap="round" stroke-linejoin="round"><path d="M7.3 1 L7.3 27.5"/><path d="M0.4 7.8 L7.3 1 L14.2 7.8"/><path d="M20.1 1 L20.1 27.5"/><path d="M13.2 20.7 L20.1 27.5 L27 20.7"/></g></svg>
<svg style="position:absolute;left:2461.5px;top:607.5px;overflow:visible;" width="28" height="29" viewBox="0 0 28 29"><g fill="none" stroke="#455a63" stroke-width="2.6" stroke-linecap="round" stroke-linejoin="round"><path d="M7.3 1 L7.3 27.5"/><path d="M0.4 7.8 L7.3 1 L14.2 7.8"/><path d="M20.1 1 L20.1 27.5"/><path d="M13.2 20.7 L20.1 27.5 L27 20.7"/></g></svg>
<svg style="position:absolute;left:2784px;top:607.5px;overflow:visible;" width="28" height="29" viewBox="0 0 28 29"><g fill="none" stroke="#455a63" stroke-width="2.6" stroke-linecap="round" stroke-linejoin="round"><path d="M7.3 1 L7.3 27.5"/><path d="M0.4 7.8 L7.3 1 L14.2 7.8"/><path d="M20.1 1 L20.1 27.5"/><path d="M13.2 20.7 L20.1 27.5 L27 20.7"/></g></svg>
<svg style="position:absolute;left:1697px;top:607.5px;overflow:visible;" width="22" height="29" viewBox="0 0 22 29"><g fill="none" stroke="#455a63" stroke-width="2.9" stroke-linecap="round" stroke-linejoin="round"><path d="M11 1 L11 28"/><path d="M1.5 18.5 L11 27.8 L20.5 18.5"/></g></svg>
<svg style="position:absolute;left:2728px;top:610px;overflow:visible;" width="24" height="24" viewBox="0 0 24 24"><g fill="none" stroke="#0d1a1e" stroke-width="2.2" stroke-linecap="round"><circle cx="12" cy="12" r="10.9"/><path d="M9.2 9.6 Q9.2 6.6 12 6.6 Q14.8 6.6 14.8 9.3 Q14.8 11 13 12 Q12 12.6 12 14"/></g><circle cx="12" cy="17.6" r="1.4" fill="#0d1a1e"/></svg>
<div style="position:absolute;left:458px;top:674px;width:2400px;height:4px;background:#dde5e8;"></div>
<div style="position:absolute;left:490px;top:716px;width:56px;height:56px;background:#c00000;border-radius:8px;box-shadow:0 2px 3px rgba(60,0,0,0.25);"></div>
<svg style="position:absolute;left:501.5px;top:729px;overflow:visible;" width="33" height="31" viewBox="0 0 33 31"><polygon points="16.30,2.00 20.53,9.98 29.42,11.54 23.15,18.02 24.41,26.96 16.30,23.00 8.19,26.96 9.45,18.02 3.18,11.54 12.07,9.98" fill="none" stroke="#fff" stroke-width="2.9" stroke-linejoin="round"/></svg>
<div style="position:absolute;top:712.5px;font-size:27.5px;line-height:27.5px;color:#0d1a1e;font-weight:normal;white-space:nowrap;left:578.00px;-webkit-text-stroke:0.15px #0d1a1e;letter-spacing:0.651px;">Sold</div>
<div style="position:absolute;top:751.6px;font-size:24px;line-height:24px;color:#3d5560;font-weight:normal;white-space:nowrap;left:578.00px;letter-spacing:0.756px;">(Default Metric) Sold</div>
<div style="position:absolute;left:1102px;top:704px;width:80px;height:80px;background:#a01634;border-radius:50%;"></div>
<svg style="position:absolute;left:1102px;top:704px;overflow:visible;" width="80" height="80" viewBox="0 0 80 80"><g fill="none" stroke="#fff" stroke-width="4" stroke-linecap="round" stroke-linejoin="round"><path d="M24 50.2 L34.6 40 L40 45 L56 30.5"/><path d="M46 30.3 L56.4 30.3 L56.4 40"/></g></svg>
<div style="position:absolute;top:729.6px;font-size:27.5px;line-height:27.5px;color:#0d1a1e;font-weight:normal;white-space:nowrap;left:1205.50px;-webkit-text-stroke:0.6px #0d1a1e;letter-spacing:1.447px;">Lead Status</div>
<svg style="position:absolute;left:1540px;top:722px;overflow:visible;" width="28.5" height="43.5" viewBox="0 0 38 58"><g fill="none" stroke="url(#rg)" stroke-width="3.7" stroke-linecap="round" stroke-linejoin="round"><path d="M1.9 1.6 L1.9 38.9 A16.6 16.6 0 0 0 35.1 38.9 L35.1 1.6"/><path d="M1.9 1.6 C9.5 4.5 14.3 10.5 14.3 17.8 C14.3 25 9.5 30.5 1.9 33"/><path d="M35.1 1.6 C27.5 4.5 22.7 10.5 22.7 17.8 C22.7 25 27.5 30.5 35.1 33"/><path d="M1.9 34.4 A16.6 16.6 0 0 1 18.5 51 L18.5 55.5"/><path d="M35.1 34.4 A16.6 16.6 0 0 0 18.5 51"/></g></svg>
<div style="position:absolute;top:731.8px;font-size:24px;line-height:24px;color:#3d5058;font-weight:normal;white-space:nowrap;left:1618.50px;letter-spacing:-0.175px;">Jul 21, 2025</div>
<div style="position:absolute;left:1926px;top:723px;width:98px;height:42px;background:#dfe6e8;border-radius:8px;"></div>
<div style="position:absolute;top:731.2px;font-size:24px;line-height:24px;color:#0d1a1e;font-weight:normal;white-space:nowrap;left:1933.80px;-webkit-text-stroke:0.5px #0d1a1e;letter-spacing:1.468px;">default</div>
<div style="position:absolute;top:731.8px;font-size:24px;line-height:24px;color:#3d5058;font-weight:normal;white-space:nowrap;left:2337.50px;letter-spacing:0.553px;">Dec 26, 2024</div>
<div style="position:absolute;top:729.7px;font-size:27.5px;line-height:27.5px;color:#0d1a1e;font-weight:normal;white-space:nowrap;right:176.5px;">11</div>
<div style="position:absolute;left:2810.7px;top:729.4000000000001px;width:6.600000000000364px;height:6.599999999999909px;background:#44575f;border-radius:50%;"></div>
<div style="position:absolute;left:2810.7px;top:740.7px;width:6.600000000000364px;height:6.599999999999909px;background:#44575f;border-radius:50%;"></div>
<div style="position:absolute;left:2810.7px;top:752.0px;width:6.600000000000364px;height:6.599999999999909px;background:#44575f;border-radius:50%;"></div>
<div style="position:absolute;left:458px;top:810px;width:2400px;height:2px;background:#e1e8ea;"></div>
<div style="position:absolute;left:490px;top:850px;width:56px;height:56px;background:#c00000;border-radius:8px;box-shadow:0 2px 3px rgba(60,0,0,0.25);"></div>
<svg style="position:absolute;left:501.5px;top:863px;overflow:visible;" width="33" height="31" viewBox="0 0 33 31"><polygon points="16.30,2.00 20.53,9.98 29.42,11.54 23.15,18.02 24.41,26.96 16.30,23.00 8.19,26.96 9.45,18.02 3.18,11.54 12.07,9.98" fill="none" stroke="#fff" stroke-width="2.9" stroke-linejoin="round"/></svg>
<div style="position:absolute;top:846.5px;font-size:27.5px;line-height:27.5px;color:#0d1a1e;font-weight:normal;white-space:nowrap;left:579.00px;-webkit-text-stroke:0.15px #0d1a1e;letter-spacing:1.416px;">Appointment Set</div>
<div style="position:absolute;top:885.6px;font-size:24px;line-height:24px;color:#3d5560;font-weight:normal;white-space:nowrap;left:578.00px;letter-spacing:0.930px;">(Default Metric) Appointment Set</div>
<div style="position:absolute;left:1102px;top:838px;width:80px;height:80px;background:#a01634;border-radius:50%;"></div>
<svg style="position:absolute;left:1102px;top:838px;overflow:visible;" width="80" height="80" viewBox="0 0 80 80"><g fill="none" stroke="#fff" stroke-width="4" stroke-linecap="round" stroke-linejoin="round"><path d="M24 50.2 L34.6 40 L40 45 L56 30.5"/><path d="M46 30.3 L56.4 30.3 L56.4 40"/></g></svg>
<div style="position:absolute;top:863.6px;font-size:27.5px;line-height:27.5px;color:#0d1a1e;font-weight:normal;white-space:nowrap;left:1205.50px;-webkit-text-stroke:0.6px #0d1a1e;letter-spacing:1.447px;">Lead Status</div>
<svg style="position:absolute;left:1540px;top:856px;overflow:visible;" width="28.5" height="43.5" viewBox="0 0 38 58"><g fill="none" stroke="url(#rg)" stroke-width="3.7" stroke-linecap="round" stroke-linejoin="round"><path d="M1.9 1.6 L1.9 38.9 A16.6 16.6 0 0 0 35.1 38.9 L35.1 1.6"/><path d="M1.9 1.6 C9.5 4.5 14.3 10.5 14.3 17.8 C14.3 25 9.5 30.5 1.9 33"/><path d="M35.1 1.6 C27.5 4.5 22.7 10.5 22.7 17.8 C22.7 25 27.5 30.5 35.1 33"/><path d="M1.9 34.4 A16.6 16.6 0 0 1 18.5 51 L18.5 55.5"/><path d="M35.1 34.4 A16.6 16.6 0 0 0 18.5 51"/></g></svg>
<div style="position:absolute;top:865.8px;font-size:24px;line-height:24px;color:#3d5058;font-weight:normal;white-space:nowrap;left:1618.50px;letter-spacing:-0.175px;">Jul 21, 2025</div>
<div style="position:absolute;left:1926px;top:857px;width:98px;height:42px;background:#dfe6e8;border-radius:8px;"></div>
<div style="position:absolute;top:865.2px;font-size:24px;line-height:24px;color:#0d1a1e;font-weight:normal;white-space:nowrap;left:1933.80px;-webkit-text-stroke:0.5px #0d1a1e;letter-spacing:1.468px;">default</div>
<div style="position:absolute;top:865.8px;font-size:24px;line-height:24px;color:#3d5058;font-weight:normal;white-space:nowrap;left:2337.50px;letter-spacing:0.553px;">Dec 26, 2024</div>
<div style="position:absolute;top:863.7px;font-size:27.5px;line-height:27.5px;color:#0d1a1e;font-weight:normal;white-space:nowrap;right:176.5px;">17</div>
<div style="position:absolute;left:2810.7px;top:863.4000000000001px;width:6.600000000000364px;height:6.599999999999909px;background:#44575f;border-radius:50%;"></div>
<div style="position:absolute;left:2810.7px;top:874.7px;width:6.600000000000364px;height:6.599999999999909px;background:#44575f;border-radius:50%;"></div>
<div style="position:absolute;left:2810.7px;top:886.0px;width:6.600000000000364px;height:6.599999999999909px;background:#44575f;border-radius:50%;"></div>
<div style="position:absolute;left:458px;top:944px;width:2400px;height:2px;background:#e1e8ea;"></div>
<div style="position:absolute;left:490px;top:984px;width:56px;height:56px;background:#c00000;border-radius:8px;box-shadow:0 2px 3px rgba(60,0,0,0.25);"></div>
<svg style="position:absolute;left:501.5px;top:997px;overflow:visible;" width="33" height="31" viewBox="0 0 33 31"><polygon points="16.30,2.00 20.53,9.98 29.42,11.54 23.15,18.02 24.41,26.96 16.30,23.00 8.19,26.96 9.45,18.02 3.18,11.54 12.07,9.98" fill="none" stroke="#fff" stroke-width="2.9" stroke-linejoin="round"/></svg>
<div style="position:absolute;top:980.5px;font-size:27.5px;line-height:27.5px;color:#0d1a1e;font-weight:normal;white-space:nowrap;left:578.00px;-webkit-text-stroke:0.15px #0d1a1e;letter-spacing:1.526px;">Contact Made</div>
<div style="position:absolute;top:1019.6px;font-size:24px;line-height:24px;color:#3d5560;font-weight:normal;white-space:nowrap;left:578.00px;letter-spacing:0.898px;">(Default Metric) Contact Made</div>
<div style="position:absolute;left:1102px;top:972px;width:80px;height:80px;background:#a01634;border-radius:50%;"></div>
<svg style="position:absolute;left:1102px;top:972px;overflow:visible;" width="80" height="80" viewBox="0 0 80 80"><g fill="none" stroke="#fff" stroke-width="4" stroke-linecap="round" stroke-linejoin="round"><path d="M24 50.2 L34.6 40 L40 45 L56 30.5"/><path d="M46 30.3 L56.4 30.3 L56.4 40"/></g></svg>
<div style="position:absolute;top:997.6px;font-size:27.5px;line-height:27.5px;color:#0d1a1e;font-weight:normal;white-space:nowrap;left:1205.50px;-webkit-text-stroke:0.6px #0d1a1e;letter-spacing:1.447px;">Lead Status</div>
<svg style="position:absolute;left:1540px;top:990px;overflow:visible;" width="28.5" height="43.5" viewBox="0 0 38 58"><g fill="none" stroke="url(#rg)" stroke-width="3.7" stroke-linecap="round" stroke-linejoin="round"><path d="M1.9 1.6 L1.9 38.9 A16.6 16.6 0 0 0 35.1 38.9 L35.1 1.6"/><path d="M1.9 1.6 C9.5 4.5 14.3 10.5 14.3 17.8 C14.3 25 9.5 30.5 1.9 33"/><path d="M35.1 1.6 C27.5 4.5 22.7 10.5 22.7 17.8 C22.7 25 27.5 30.5 35.1 33"/><path d="M1.9 34.4 A16.6 16.6 0 0 1 18.5 51 L18.5 55.5"/><path d="M35.1 34.4 A16.6 16.6 0 0 0 18.5 51"/></g></svg>
<div style="position:absolute;top:999.8px;font-size:24px;line-height:24px;color:#3d5058;font-weight:normal;white-space:nowrap;left:1618.50px;letter-spacing:-0.175px;">Jul 21, 2025</div>
<div style="position:absolute;left:1926px;top:991px;width:98px;height:42px;background:#dfe6e8;border-radius:8px;"></div>
<div style="position:absolute;top:999.2px;font-size:24px;line-height:24px;color:#0d1a1e;font-weight:normal;white-space:nowrap;left:1933.80px;-webkit-text-stroke:0.5px #0d1a1e;letter-spacing:1.468px;">default</div>
<div style="position:absolute;top:999.8px;font-size:24px;line-height:24px;color:#3d5058;font-weight:normal;white-space:nowrap;left:2337.50px;letter-spacing:0.553px;">Dec 26, 2024</div>
<div style="position:absolute;top:997.7px;font-size:27.5px;line-height:27.5px;color:#0d1a1e;font-weight:normal;white-space:nowrap;right:176.5px;">4</div>
<div style="position:absolute;left:2810.7px;top:997.4000000000001px;width:6.600000000000364px;height:6.599999999999909px;background:#44575f;border-radius:50%;"></div>
<div style="position:absolute;left:2810.7px;top:1008.7px;width:6.600000000000364px;height:6.599999999999909px;background:#44575f;border-radius:50%;"></div>
<div style="position:absolute;left:2810.7px;top:1020.0px;width:6.600000000000364px;height:6.599999999999909px;background:#44575f;border-radius:50%;"></div>
<div style="position:absolute;left:458px;top:1078px;width:2400px;height:2px;background:#e1e8ea;"></div>
<div style="position:absolute;left:490px;top:1118px;width:56px;height:56px;background:#c00000;border-radius:8px;box-shadow:0 2px 3px rgba(60,0,0,0.25);"></div>
<svg style="position:absolute;left:501.5px;top:1131px;overflow:visible;" width="33" height="31" viewBox="0 0 33 31"><polygon points="16.30,2.00 20.53,9.98 29.42,11.54 23.15,18.02 24.41,26.96 16.30,23.00 8.19,26.96 9.45,18.02 3.18,11.54 12.07,9.98" fill="none" stroke="#fff" stroke-width="2.9" stroke-linejoin="round"/></svg>
<div style="position:absolute;top:1114.5px;font-size:27.5px;line-height:27.5px;color:#0d1a1e;font-weight:normal;white-space:nowrap;left:577.00px;-webkit-text-stroke:0.15px #0d1a1e;letter-spacing:1.082px;">Doors Knocked</div>
<div style="position:absolute;top:1153.6px;font-size:24px;line-height:24px;color:#3d5560;font-weight:normal;white-space:nowrap;left:578.00px;letter-spacing:0.733px;">(Default Metric) Doors Knocked</div>
<div style="position:absolute;left:1102px;top:1106px;width:80px;height:80px;background:#a01634;border-radius:50%;"></div>
<svg style="position:absolute;left:1102px;top:1106px;overflow:visible;" width="80" height="80" viewBox="0 0 80 80"><g fill="none" stroke="#fff" stroke-width="4" stroke-linecap="round" stroke-linejoin="round"><path d="M24 50.2 L34.6 40 L40 45 L56 30.5"/><path d="M46 30.3 L56.4 30.3 L56.4 40"/></g></svg>
<div style="position:absolute;top:1131.6px;font-size:27.5px;line-height:27.5px;color:#0d1a1e;font-weight:normal;white-space:nowrap;left:1205.50px;-webkit-text-stroke:0.6px #0d1a1e;letter-spacing:1.447px;">Lead Status</div>
<svg style="position:absolute;left:1540px;top:1124px;overflow:visible;" width="28.5" height="43.5" viewBox="0 0 38 58"><g fill="none" stroke="url(#rg)" stroke-width="3.7" stroke-linecap="round" stroke-linejoin="round"><path d="M1.9 1.6 L1.9 38.9 A16.6 16.6 0 0 0 35.1 38.9 L35.1 1.6"/><path d="M1.9 1.6 C9.5 4.5 14.3 10.5 14.3 17.8 C14.3 25 9.5 30.5 1.9 33"/><path d="M35.1 1.6 C27.5 4.5 22.7 10.5 22.7 17.8 C22.7 25 27.5 30.5 35.1 33"/><path d="M1.9 34.4 A16.6 16.6 0 0 1 18.5 51 L18.5 55.5"/><path d="M35.1 34.4 A16.6 16.6 0 0 0 18.5 51"/></g></svg>
<div style="position:absolute;top:1133.8px;font-size:24px;line-height:24px;color:#3d5058;font-weight:normal;white-space:nowrap;left:1618.50px;letter-spacing:-0.175px;">Jul 21, 2025</div>
<div style="position:absolute;left:1926px;top:1125px;width:98px;height:42px;background:#dfe6e8;border-radius:8px;"></div>
<div style="position:absolute;top:1133.2px;font-size:24px;line-height:24px;color:#0d1a1e;font-weight:normal;white-space:nowrap;left:1933.80px;-webkit-text-stroke:0.5px #0d1a1e;letter-spacing:1.468px;">default</div>
<div style="position:absolute;top:1133.8px;font-size:24px;line-height:24px;color:#3d5058;font-weight:normal;white-space:nowrap;left:2337.50px;letter-spacing:0.553px;">Dec 26, 2024</div>
<div style="position:absolute;top:1131.7px;font-size:27.5px;line-height:27.5px;color:#0d1a1e;font-weight:normal;white-space:nowrap;right:176.5px;">8</div>
<div style="position:absolute;left:2810.7px;top:1131.4px;width:6.600000000000364px;height:6.599999999999909px;background:#44575f;border-radius:50%;"></div>
<div style="position:absolute;left:2810.7px;top:1142.7px;width:6.600000000000364px;height:6.599999999999909px;background:#44575f;border-radius:50%;"></div>
<div style="position:absolute;left:2810.7px;top:1154.0px;width:6.600000000000364px;height:6.599999999999909px;background:#44575f;border-radius:50%;"></div>
<div style="position:absolute;left:458px;top:1212px;width:2400px;height:2px;background:#e1e8ea;"></div>
<div style="position:absolute;left:490px;top:1252px;width:56px;height:56px;box-sizing:border-box;border:2px solid #dfe6e8;border-radius:8px;background:#fff;box-shadow:0 2px 3px rgba(30,50,60,0.16);"></div>
<svg style="position:absolute;left:501.5px;top:1265px;overflow:visible;" width="33" height="31" viewBox="0 0 33 31"><polygon points="16.30,2.00 20.53,9.98 29.42,11.54 23.15,18.02 24.41,26.96 16.30,23.00 8.19,26.96 9.45,18.02 3.18,11.54 12.07,9.98" fill="none" stroke="#5c2b2b" stroke-width="2.7" stroke-linejoin="round"/></svg>
<div style="position:absolute;top:1248.5px;font-size:27.5px;line-height:27.5px;color:#0d1a1e;font-weight:normal;white-space:nowrap;left:578.00px;-webkit-text-stroke:0.15px #0d1a1e;letter-spacing:0.924px;">Stage – Pending</div>
<div style="position:absolute;top:1287.6px;font-size:24px;line-height:24px;color:#3d5560;font-weight:normal;white-space:nowrap;left:578.00px;letter-spacing:0.578px;">Leads in the Pending Stage</div>
<div style="position:absolute;left:1102px;top:1240px;width:80px;height:80px;background:#1c4fa8;border-radius:50%;"></div>
<svg style="position:absolute;left:1102px;top:1240px;overflow:visible;" width="80" height="80" viewBox="0 0 80 80"><g fill="#fff"><rect x="23.8" y="25.8" width="32.4" height="4.4" rx="2.2"/><path d="M25.9 29 L54.2 29 L54.2 46.3 Q54.2 50.3 50.2 50.3 L29.9 50.3 Q25.9 50.3 25.9 46.3 Z"/></g><g fill="none" stroke="#1c4fa8" stroke-width="3.4" stroke-linecap="round" stroke-linejoin="round"><path d="M31 42 L36.4 37.3 L40.1 41.3 L48.8 33"/></g><g fill="none" stroke="#fff" stroke-width="3.2" stroke-linecap="round"><path d="M40 51 L34 55"/><path d="M40 51 L46 55"/></g></svg>
<div style="position:absolute;top:1265.6px;font-size:27.5px;line-height:27.5px;color:#0d1a1e;font-weight:normal;white-space:nowrap;left:1205.50px;-webkit-text-stroke:0.6px #0d1a1e;letter-spacing:1.401px;">Lead Stage</div>
<svg style="position:absolute;left:1540px;top:1258px;overflow:visible;" width="28.5" height="43.5" viewBox="0 0 38 58"><g fill="none" stroke="url(#rg)" stroke-width="3.7" stroke-linecap="round" stroke-linejoin="round"><path d="M1.9 1.6 L1.9 38.9 A16.6 16.6 0 0 0 35.1 38.9 L35.1 1.6"/><path d="M1.9 1.6 C9.5 4.5 14.3 10.5 14.3 17.8 C14.3 25 9.5 30.5 1.9 33"/><path d="M35.1 1.6 C27.5 4.5 22.7 10.5 22.7 17.8 C22.7 25 27.5 30.5 35.1 33"/><path d="M1.9 34.4 A16.6 16.6 0 0 1 18.5 51 L18.5 55.5"/><path d="M35.1 34.4 A16.6 16.6 0 0 0 18.5 51"/></g></svg>
<div style="position:absolute;top:1267.8px;font-size:24px;line-height:24px;color:#3d5058;font-weight:normal;white-space:nowrap;left:1617.50px;letter-spacing:0.637px;">Mar 4, 2025</div>
<div style="position:absolute;top:1267.8px;font-size:24px;line-height:24px;color:#3d5058;font-weight:normal;white-space:nowrap;left:2337.50px;letter-spacing:0.627px;">May 8, 2024</div>
<div style="position:absolute;top:1265.7px;font-size:27.5px;line-height:27.5px;color:#0d1a1e;font-weight:normal;white-space:nowrap;right:176.5px;">2</div>
<div style="position:absolute;left:2810.7px;top:1265.4px;width:6.600000000000364px;height:6.599999999999909px;background:#44575f;border-radius:50%;"></div>
<div style="position:absolute;left:2810.7px;top:1276.7px;width:6.600000000000364px;height:6.599999999999909px;background:#44575f;border-radius:50%;"></div>
<div style="position:absolute;left:2810.7px;top:1288.0px;width:6.600000000000364px;height:6.599999999999909px;background:#44575f;border-radius:50%;"></div>
<div style="position:absolute;left:458px;top:1346px;width:2400px;height:2px;background:#e1e8ea;"></div>
<div style="position:absolute;left:490px;top:1386px;width:56px;height:56px;box-sizing:border-box;border:2px solid #dfe6e8;border-radius:8px;background:#fff;box-shadow:0 2px 3px rgba(30,50,60,0.16);"></div>
<svg style="position:absolute;left:501.5px;top:1399px;overflow:visible;" width="33" height="31" viewBox="0 0 33 31"><polygon points="16.30,2.00 20.53,9.98 29.42,11.54 23.15,18.02 24.41,26.96 16.30,23.00 8.19,26.96 9.45,18.02 3.18,11.54 12.07,9.98" fill="none" stroke="#5c2b2b" stroke-width="2.7" stroke-linejoin="round"/></svg>
<div style="position:absolute;top:1382.5px;font-size:27.5px;line-height:27.5px;color:#0d1a1e;font-weight:normal;white-space:nowrap;left:578.00px;-webkit-text-stroke:0.15px #0d1a1e;letter-spacing:0.793px;">Stage – Lost</div>
<div style="position:absolute;top:1421.6px;font-size:24px;line-height:24px;color:#3d5560;font-weight:normal;white-space:nowrap;left:579.00px;letter-spacing:0.610px;">All Leads in the Multiple Lost Option Stages</div>
<div style="position:absolute;left:1102px;top:1374px;width:80px;height:80px;background:#1c4fa8;border-radius:50%;"></div>
<svg style="position:absolute;left:1102px;top:1374px;overflow:visible;" width="80" height="80" viewBox="0 0 80 80"><g fill="#fff"><rect x="23.8" y="25.8" width="32.4" height="4.4" rx="2.2"/><path d="M25.9 29 L54.2 29 L54.2 46.3 Q54.2 50.3 50.2 50.3 L29.9 50.3 Q25.9 50.3 25.9 46.3 Z"/></g><g fill="none" stroke="#1c4fa8" stroke-width="3.4" stroke-linecap="round" stroke-linejoin="round"><path d="M31 42 L36.4 37.3 L40.1 41.3 L48.8 33"/></g><g fill="none" stroke="#fff" stroke-width="3.2" stroke-linecap="round"><path d="M40 51 L34 55"/><path d="M40 51 L46 55"/></g></svg>
<div style="position:absolute;top:1399.6px;font-size:27.5px;line-height:27.5px;color:#0d1a1e;font-weight:normal;white-space:nowrap;left:1205.50px;-webkit-text-stroke:0.6px #0d1a1e;letter-spacing:1.401px;">Lead Stage</div>
<svg style="position:absolute;left:1540px;top:1392px;overflow:visible;" width="28.5" height="43.5" viewBox="0 0 38 58"><g fill="none" stroke="url(#rg)" stroke-width="3.7" stroke-linecap="round" stroke-linejoin="round"><path d="M1.9 1.6 L1.9 38.9 A16.6 16.6 0 0 0 35.1 38.9 L35.1 1.6"/><path d="M1.9 1.6 C9.5 4.5 14.3 10.5 14.3 17.8 C14.3 25 9.5 30.5 1.9 33"/><path d="M35.1 1.6 C27.5 4.5 22.7 10.5 22.7 17.8 C22.7 25 27.5 30.5 35.1 33"/><path d="M1.9 34.4 A16.6 16.6 0 0 1 18.5 51 L18.5 55.5"/><path d="M35.1 34.4 A16.6 16.6 0 0 0 18.5 51"/></g></svg>
<div style="position:absolute;top:1401.8px;font-size:24px;line-height:24px;color:#3d5058;font-weight:normal;white-space:nowrap;left:1617.50px;letter-spacing:0.637px;">Mar 4, 2025</div>
<div style="position:absolute;top:1401.8px;font-size:24px;line-height:24px;color:#3d5058;font-weight:normal;white-space:nowrap;left:2338.50px;letter-spacing:-0.072px;">Apr 19, 2024</div>
<div style="position:absolute;top:1399.7px;font-size:27.5px;line-height:27.5px;color:#0d1a1e;font-weight:normal;white-space:nowrap;right:176.5px;">2</div>
<div style="position:absolute;left:2810.7px;top:1399.4px;width:6.600000000000364px;height:6.599999999999909px;background:#44575f;border-radius:50%;"></div>
<div style="position:absolute;left:2810.7px;top:1410.7px;width:6.600000000000364px;height:6.599999999999909px;background:#44575f;border-radius:50%;"></div>
<div style="position:absolute;left:2810.7px;top:1422.0px;width:6.600000000000364px;height:6.599999999999909px;background:#44575f;border-radius:50%;"></div>
<div style="position:absolute;left:458px;top:1480px;width:2400px;height:2px;background:#e1e8ea;"></div>
<div style="position:absolute;left:490px;top:1520px;width:56px;height:56px;box-sizing:border-box;border:2px solid #dfe6e8;border-radius:8px;background:#fff;box-shadow:0 2px 3px rgba(30,50,60,0.16);"></div>
<svg style="position:absolute;left:501.5px;top:1533px;overflow:visible;" width="33" height="31" viewBox="0 0 33 31"><polygon points="16.30,2.00 20.53,9.98 29.42,11.54 23.15,18.02 24.41,26.96 16.30,23.00 8.19,26.96 9.45,18.02 3.18,11.54 12.07,9.98" fill="none" stroke="#5c2b2b" stroke-width="2.7" stroke-linejoin="round"/></svg>
<div style="position:absolute;top:1516.5px;font-size:27.5px;line-height:27.5px;color:#0d1a1e;font-weight:normal;white-space:nowrap;left:578.00px;-webkit-text-stroke:0.15px #0d1a1e;letter-spacing:0.801px;">Stage – Sold</div>
<div style="position:absolute;top:1555.6px;font-size:24px;line-height:24px;color:#3d5560;font-weight:normal;white-space:nowrap;left:579.0px;letter-spacing:0.550px;">All Leads in the Sold Stage</div>
<div style="position:absolute;left:1102px;top:1508px;width:80px;height:80px;background:#1c4fa8;border-radius:50%;"></div>
<svg style="position:absolute;left:1102px;top:1508px;overflow:visible;" width="80" height="80" viewBox="0 0 80 80"><g fill="#fff"><rect x="23.8" y="25.8" width="32.4" height="4.4" rx="2.2"/><path d="M25.9 29 L54.2 29 L54.2 46.3 Q54.2 50.3 50.2 50.3 L29.9 50.3 Q25.9 50.3 25.9 46.3 Z"/></g><g fill="none" stroke="#1c4fa8" stroke-width="3.4" stroke-linecap="round" stroke-linejoin="round"><path d="M31 42 L36.4 37.3 L40.1 41.3 L48.8 33"/></g><g fill="none" stroke="#fff" stroke-width="3.2" stroke-linecap="round"><path d="M40 51 L34 55"/><path d="M40 51 L46 55"/></g></svg>
<div style="position:absolute;top:1533.6px;font-size:27.5px;line-height:27.5px;color:#0d1a1e;font-weight:normal;white-space:nowrap;left:1205.50px;-webkit-text-stroke:0.6px #0d1a1e;letter-spacing:1.401px;">Lead Stage</div>
<svg style="position:absolute;left:1540px;top:1526px;overflow:visible;" width="28.5" height="43.5" viewBox="0 0 38 58"><g fill="none" stroke="url(#rg)" stroke-width="3.7" stroke-linecap="round" stroke-linejoin="round"><path d="M1.9 1.6 L1.9 38.9 A16.6 16.6 0 0 0 35.1 38.9 L35.1 1.6"/><path d="M1.9 1.6 C9.5 4.5 14.3 10.5 14.3 17.8 C14.3 25 9.5 30.5 1.9 33"/><path d="M35.1 1.6 C27.5 4.5 22.7 10.5 22.7 17.8 C22.7 25 27.5 30.5 35.1 33"/><path d="M1.9 34.4 A16.6 16.6 0 0 1 18.5 51 L18.5 55.5"/><path d="M35.1 34.4 A16.6 16.6 0 0 0 18.5 51"/></g></svg>
<div style="position:absolute;top:1535.8px;font-size:24px;line-height:24px;color:#3d5058;font-weight:normal;white-space:nowrap;left:1617.50px;letter-spacing:0.637px;">Mar 4, 2025</div>
<div style="position:absolute;top:1535.8px;font-size:24px;line-height:24px;color:#3d5058;font-weight:normal;white-space:nowrap;left:2338.50px;letter-spacing:-0.072px;">Apr 19, 2024</div>
<div style="position:absolute;top:1533.7px;font-size:27.5px;line-height:27.5px;color:#0d1a1e;font-weight:normal;white-space:nowrap;right:176.5px;">3</div>
<div style="position:absolute;left:2810.7px;top:1533.4px;width:6.600000000000364px;height:6.599999999999909px;background:#44575f;border-radius:50%;"></div>
<div style="position:absolute;left:2810.7px;top:1544.7px;width:6.600000000000364px;height:6.599999999999909px;background:#44575f;border-radius:50%;"></div>
<div style="position:absolute;left:2810.7px;top:1556.0px;width:6.600000000000364px;height:6.599999999999909px;background:#44575f;border-radius:50%;"></div>
</div></div>
<svg style="position:absolute;left:2555px;top:150px;overflow:visible;" width="340" height="140" viewBox="0 0 340 140"><rect x="15" y="12" width="305" height="112" rx="45" fill="none" stroke="#ff2a00" stroke-width="14"/></svg>
<svg style="position:absolute;left:2330px;top:250px;overflow:visible;" width="240" height="120" viewBox="0 0 240 120"><path fill="#ff2a00" stroke="#ff2a00" stroke-width="1.5" stroke-linejoin="round" d="M10.5 109.8 Q92 70 148.7 27 L134 9.6 L225.3 12.8 L167.7 84.6 L164.5 61.2 Q86.6 75.6 13.8 113 Q8.5 115.3 6.8 112.6 Q5.8 110.6 10.5 109.8 Z"/></svg>
</body></html>
